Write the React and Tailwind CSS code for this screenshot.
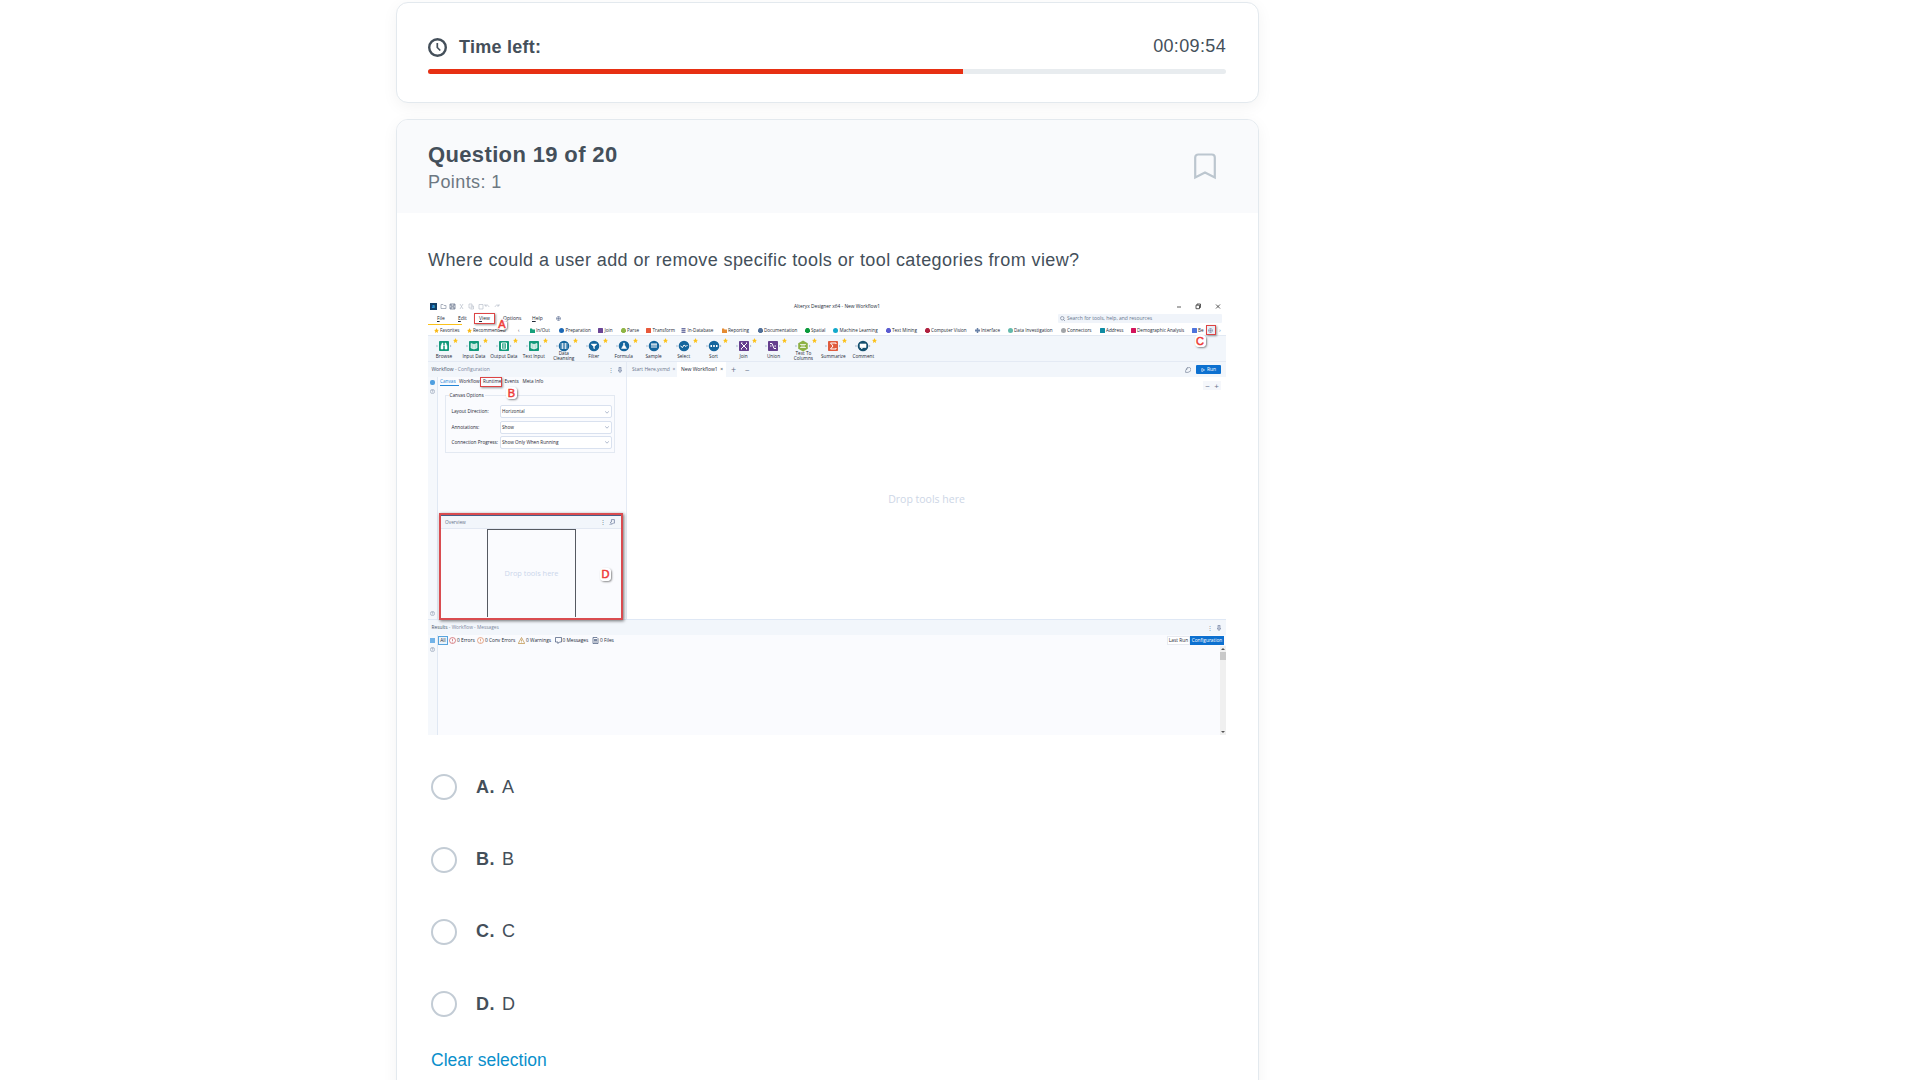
import React from "react";

const categories = [
  { x: 433.5, label: "Favorites", color: "#f9b917", shape: "star" },
  { x: 466.5, label: "Recommended", color: "#f9b917", shape: "star" },
  { x: 518, label: "‹", shape: "none" },
  { x: 529.5, label: "In/Out", color: "#15a07c", shape: "folder" },
  { x: 559, label: "Preparation", color: "#1b68b5", shape: "round" },
  { x: 598, label: "Join", color: "#6b4596", shape: "square" },
  { x: 620.5, label: "Parse", color: "#8fb545", shape: "hex" },
  { x: 646, label: "Transform", color: "#e8583a", shape: "square" },
  { x: 681, label: "In-Database", color: "#6f74a4", shape: "stack" },
  { x: 721.5, label: "Reporting", color: "#e58b32", shape: "folder" },
  { x: 757.5, label: "Documentation", color: "#50709a", shape: "hex" },
  { x: 804.5, label: "Spatial", color: "#0b9a3c", shape: "hex" },
  { x: 833, label: "Machine Learning", color: "#12a9cc", shape: "round" },
  { x: 885.5, label: "Text Mining", color: "#5a5bd0", shape: "hex" },
  { x: 924.5, label: "Computer Vision", color: "#b0203f", shape: "hex" },
  { x: 974.5, label: "Interface", color: "#6a82a8", shape: "cross" },
  { x: 1007.5, label: "Data Investigation", color: "#62b9ab", shape: "round" },
  { x: 1060.5, label: "Connectors", color: "#a2a5a9", shape: "round" },
  { x: 1099.5, label: "Address", color: "#0e8ba3", shape: "square" },
  { x: 1130.5, label: "Demographic Analysis", color: "#d3135c", shape: "square" },
  { x: 1191.5, label: "Be", color: "#4f74dc", shape: "square" },
];

const tools = [
  ["Browse", "browse", "#12997a"],
  ["Input Data", "book", "#12997a"],
  ["Output Data", "page", "#12997a"],
  ["Text Input", "book", "#12997a"],
  ["Data\nCleansing", "grid", "#14659d"],
  ["Filter", "funnel", "#14659d"],
  ["Formula", "flask", "#14659d"],
  ["Sample", "tubes", "#14659d"],
  ["Select", "check", "#14659d"],
  ["Sort", "dots", "#14659d"],
  ["Join", "join", "#643e8e"],
  ["Union", "union", "#643e8e"],
  ["Text To\nColumns", "columns", "#8db144"],
  ["Summarize", "sigma", "#e05c3e"],
  ["Comment", "comment", "#14506f"],
];

function CategoryShape({ shape, color }) {
  if (shape === "none") return null;
  return (
    <svg className="size-[5px] shrink-0" viewBox="0 0 10 10" fill={color}>
      {shape === "star" && <path d="M5 0l1.500 3.400 3.500.4-2.600 2.400.7 3.600L5 8 1.900 9.800l.7-3.600L0 3.800l3.500-.4z" />}
      {shape === "folder" && <path d="M0 1h4l1 2h5v7H0z" />}
      {shape === "round" && <circle cx="5" cy="5" r="5" />}
      {shape === "square" && <rect width="10" height="10" rx="1" />}
      {shape === "hex" && <path d="M3 0h4l3 3v4l-3 3H3L0 7V3z" />}
      {shape === "stack" && <path d="M1 0h8v3H1zM1 4h8v2H1zM1 7h8v3H1z" />}
      {shape === "cross" && <path d="M3.500 0h3v3H10v4H6.500v3h-3V7H0V3h3.500z" />}
    </svg>
  );
}

function ToolGlyph({ kind, color }) {
  const square = ["browse", "book", "page", "join", "union", "sigma"].includes(kind);
  return (
    <svg className="h-[12px] w-[18px] shrink-0" viewBox="0 0 18 12">
      <path d="M1.500 4.700v2.600L3 6zM15 4.700v2.600L16.500 6z" fill="#9fb4cb" />
      {square ? (
        <rect x="4" y="1" width="10" height="10" rx="0.800" fill={color} />
      ) : kind === "columns" ? (
        <path d="M9 .5l4.800 2.700v5.600L9 11.500 4.200 8.800V3.200z" fill={color} />
      ) : (
        <circle cx="9" cy="6" r="5.300" fill={color} />
      )}
      <g stroke="#fff" strokeWidth="1" fill="none">
        {kind === "browse" && <path d="M6 9V6l1.200-3h.8v6zM12 9V6l-1.200-3H10v6zM8 5.500h2" fill="#fff" strokeWidth=".5" />}
        {kind === "book" && <path d="M6 3.500l3 1 3-1v4.500L9 9 6 8zM9 4.500V9" fill="#fff" fillOpacity=".7" strokeWidth=".6" />}
        {kind === "page" && <path d="M6.500 3h5v6h-5zM7.500 5h3M7.500 7h3" />}
        {kind === "grid" && <path d="M5.500 4h7M5.500 6h7M5.500 8h7M7.500 3v6M10.500 3v6" strokeWidth=".7" />}
        {kind === "funnel" && <path d="M6 4h6L9.500 6.500V9l-1-1V6.500z" fill="#fff" strokeWidth=".4" />}
        {kind === "flask" && <path d="M8.500 3h1v2l2 3.500h-5l2-3.500z" fill="#fff" strokeWidth=".5" />}
        {kind === "tubes" && <path d="M6 4h6M7 4v4M9 4v4M11 4v4" />}
        {kind === "check" && <path d="M5.500 6l2 1.500L9 5l2 1.500L12.500 5" />}
        {kind === "dots" && <path d="M5.500 6h1.500M8.200 6h1.600M11 6h1.500" strokeWidth="1.800" />}
        {kind === "join" && <path d="M6 3l6 6M12 3L6 9M6 3h1.500M11 3h1M6 9h1M11 9h1" />}
        {kind === "union" && <path d="M6 3.500h2l2 5h2M6 6h1.500M10.500 6H12" />}
        {kind === "columns" && <path d="M6 4.500h6M6 7.500h6M8 4v4M10 4v4" strokeWidth=".7" />}
        {kind === "sigma" && <path d="M12 4V3H6.500L9 6 6.500 9H12V8" />}
        {kind === "comment" && <path d="M6 4h6v3.500H9L7.500 9V7.500H6z" fill="#fff" strokeWidth=".6" />}
      </g>
    </svg>
  );
}

function Star() {
  return (
    <svg className="absolute top-[2px] right-[1px] size-[5px]" viewBox="0 0 10 10">
      <path d="M5 0l1.500 3.400 3.500.4-2.600 2.400.7 3.600L5 8 1.900 9.800l.7-3.600L0 3.800l3.500-.4z" fill="#fbc21b" />
    </svg>
  );
}

function Marker({ children, className }) {
  return (
    <span
      className={
        "absolute z-10 rounded-[4px] bg-white/90 text-center font-['Liberation_Sans'] font-normal text-[#ee3b38] shadow-[1px_1px_2px_rgba(0,0,0,0.45)] [-webkit-text-stroke:0.500px_#ee3b38] " +
        className
      }
    >
      {children}
    </span>
  );
}

function Pin() {
  return (
    <svg className="size-[6px]" viewBox="0 0 10 10" fill="none" stroke="#68789a" strokeWidth="1.200">
      <path d="M3 1h4M3.500 1v4L2 6.500h6L6.500 5V1M5 6.500V10" />
    </svg>
  );
}

function TitleBar() {
  return (
    <div className="flex h-[13px] items-center pl-[2px]">
      <div className="flex size-[7px] items-center justify-center bg-[#123f68] text-[5px] font-bold text-[#39b3f0]">a</div>
      <svg className="ml-[3px] h-[7px] w-[66px]" viewBox="0 0 66 7" fill="none" strokeWidth=".7">
        <path d="M1 1.500h2l1 1h2v3H1z" stroke="#8d96a8" />
        <path d="M10 1h5v5h-5zM11 1v2h3V1M11 6V4h3v2" stroke="#596783" />
        <path d="M20 1l3 5M23 1l-3 5M29 1h3v4h-3zM30.500 3h3v3h-3M39 1.500h4V6h-4z" stroke="#b9c0cb" />
        <path d="M49 4c-1-3-3-2-4-1M45 1v2h2M55 4c1-3 3-2 4-1M59 1v2h-2" stroke="#b9c0cb" />
      </svg>
      <div className="ml-[288px] w-[92px] text-[4.850px] font-medium text-[#222936]">Alteryx Designer x64 - New Workflow1</div>
      <svg className="ml-[289px] h-[7px] w-[48px]" viewBox="0 0 48 7" fill="none" stroke="#333" strokeWidth=".8">
        <path d="M2 4h4M21 2.200h3.500v3.500H21zM22 2V1h3.500v3.500h-1M41 1.500l4 4M45 1.500l-4 4" />
      </svg>
    </div>
  );
}

function MenuBar() {
  return (
    <div className="flex h-[11px] items-center pl-[9px] text-[5px] text-[#222936]">
      <span className="w-[21px]"><u>F</u>ile</span>
      <span className="w-[21px]"><u>E</u>dit</span>
      <span className="relative w-[24px]">
        <u>V</u>iew
        <span className="absolute -top-[3px] -left-[5px] h-[11px] w-[21px] border-[1.500px] border-[#dd4444] shadow-[1px_1px_2px_rgba(0,0,0,0.4)]" />
        <Marker className="top-[3px] left-[18px] h-[11px] w-[10px] text-[11px] leading-[11px]">A</Marker>
      </span>
      <span className="w-[29px]"><u>O</u>ptions</span>
      <span className="w-[24px]"><u>H</u>elp</span>
      <svg className="size-[5px]" viewBox="0 0 10 10" fill="none" stroke="#667799" strokeWidth="1.300">
        <circle cx="5" cy="5" r="4" /><path d="M1 5h8M5 1v8" />
      </svg>
      <div className="ml-[497px] flex h-[9px] w-[164px] items-center gap-[2px] rounded-[1px] bg-[#f0f4fa] pl-[2px] text-[#66748c]">
        <svg className="size-[5px]" viewBox="0 0 10 10" fill="none" stroke="#66748c" strokeWidth="1.200">
          <circle cx="4.500" cy="4.500" r="3.500" /><path d="M7 7l3 3" />
        </svg>
        Search for tools, help, and resources
      </div>
    </div>
  );
}

function CategoryTabs() {
  return (
    <div className="relative flex h-[12px] items-center border-b border-[#e2e9f3] pt-[1px] pl-[5.500px] text-[4.600px] text-[#222936]">
      <span className="absolute top-0 left-0 h-[1px] w-[34px] bg-[#fbc21b]" />
      {categories.map((c, i) => (
        <div
          key={c.label}
          className="flex shrink-0 items-center gap-[1.500px] overflow-visible"
          style={{ width: (categories[i + 1] ? categories[i + 1].x : 1205.5) - c.x }}
        >
          <CategoryShape shape={c.shape} color={c.color} />
          {c.label}
        </div>
      ))}
      <div className="relative flex size-[10.500px] shrink-0 items-center justify-center border-[1.500px] border-[#dd4444] bg-[#e9eef6] shadow-[1px_1px_2px_rgba(0,0,0,0.4)]">
        <svg className="size-[5px]" viewBox="0 0 10 10" fill="none" stroke="#667799"><circle cx="5" cy="5" r="4" /><path d="M1 5h8M5 1v8" /></svg>
        <Marker className="top-[9px] -left-[12px] h-[12px] w-[11px] text-[11px] leading-[12px]">C</Marker>
      </div>
      <span className="ml-[3px] text-[6px] text-[#667799]">›</span>
    </div>
  );
}

function Ribbon() {
  return (
    <div className="flex h-[26px] shrink-0 border-b border-[#e4eaf4] bg-[#f2f6fb] pl-[1px]">
      {tools.map(([label, kind, color]) => (
        <div key={label} className="relative flex w-[29.960px] flex-col items-center pt-[4px]">
          <Star />
          <ToolGlyph kind={kind} color={color} />
          <div
            className={
              "text-center text-[4.700px] whitespace-pre text-[#222936] " +
              (label.includes("\n") ? "-mt-[1.500px] leading-[5.200px]" : "leading-[8px]")
            }
          >
            {label}
          </div>
        </div>
      ))}
    </div>
  );
}

function SideStrip({ children }) {
  return <div className="flex w-[10px] shrink-0 flex-col items-center border-r border-[#e0e8f3] bg-[#f5f8fc]">{children}</div>;
}

function Help() {
  return (
    <svg className="size-[5px]" viewBox="0 0 10 10" fill="none" stroke="#8b98ae" strokeWidth="1.200">
      <circle cx="5" cy="5" r="4.200" /><path d="M3.500 4c0-2 3-2 3 0L5 5.500V7" />
    </svg>
  );
}

function SelectRow({ label, value }) {
  return (
    <div className="flex h-[15.400px] items-center">
      <span className="w-[48.500px]">{label}</span>
      <span className="flex h-[13px] w-[112px] items-center justify-between rounded-[2px] border border-[#d9e1ef] bg-white pr-[2px] pl-[1px]">
        {value}
        <svg className="size-[4px]" viewBox="0 0 10 10" fill="none" stroke="#8293b0" strokeWidth="1.600"><path d="M0 3l5 5 5-5" /></svg>
      </span>
    </div>
  );
}

function Configuration() {
  return (
    <div className="flex w-[199px] shrink-0 flex-col border-r border-[#e4eaf4] bg-[#fafbfe]">
      <div className="flex h-[15px] shrink-0 items-center bg-[#f2f6fb] pl-[3.500px] text-[5px] text-[#7c879c]">
        <span className="w-[176px]"><b className="font-medium text-[#465269]">Workflow</b> - Configuration</span>
        <span className="w-[9px] text-[6px] leading-none">⋮</span>
        <Pin />
      </div>
      <div className="flex flex-1">
        <SideStrip>
          <span className="mt-[3px] size-[5px] rounded-[2px] bg-[#4f9fe0]" />
          <span className="mt-[4px]"><Help /></span>
          <span className="mt-auto mb-[3px]"><Help /></span>
        </SideStrip>
        <div className="flex w-[188px] flex-col">
          <div className="flex h-[9px] items-center pl-[2px] text-[4.700px] text-[#1f2735]">
            <span className="flex h-[8px] w-[19px] items-center border-b border-[#2585d6] text-[#2585d6]">Canvas</span>
            <span className="w-[24px]">Workflow</span>
            <span className="relative w-[21.500px]">
              Runtime
              <span className="absolute -top-[2.500px] -left-[3px] h-[10px] w-[22px] border-[1.500px] border-[#dd4444] shadow-[1px_1px_2px_rgba(0,0,0,0.4)]" />
              <Marker className="top-[8px] left-[23px] h-[12px] w-[11px] text-[11px] leading-[12px]">B</Marker>
            </span>
            <span className="w-[18px]">Events</span>
            <span>Meta Info</span>
          </div>
          <fieldset className="mt-[6px] ml-[7px] h-[61px] w-[170px] border border-[#e3e9f2] pl-[5.500px] text-[4.700px] text-[#1f2735]">
            <legend className="-ml-[3px] px-[1px] leading-[6px]">Canvas Options</legend>
            <div className="pt-[6px]">
              <SelectRow label="Layout Direction:" value="Horizontal" />
              <SelectRow label="Annotations:" value="Show" />
              <SelectRow label="Connection Progress:" value="Show Only When Running" />
            </div>
          </fieldset>
          <Overview />
        </div>
      </div>
    </div>
  );
}

function Overview() {
  return (
    <div className="relative mt-auto -mb-px ml-[1px] flex h-[107px] w-[184px] shrink-0 flex-col border-2 border-[#d94c50] bg-[#fafbfe] shadow-[1px_1px_3px_rgba(0,0,0,0.55)]">
      <div className="flex h-[14px] items-center border-t border-b border-t-[#465f88] border-b-[#e2e8f2] bg-[#f2f6fb] pl-[4px] text-[4.800px] text-[#68748a]">
        <span className="w-[155px]">Overview</span>
        <span className="w-[9px] text-[6px] leading-none">⋮</span>
        <svg className="size-[6px]" viewBox="0 0 10 10" fill="none" stroke="#68789a" strokeWidth="1.200">
          <path d="M4 1h5v6H7M4 1v4L2 6l3 3 1-2M3 8L1 10" />
        </svg>
      </div>
      <div className="ml-[46px] flex h-[88px] w-[89px] items-center justify-center border-x border-t border-[#555a62] text-[7.400px] text-[#cbd6eb]">
        Drop tools here
      </div>
      <Marker className="top-[53px] left-[159px] h-[13px] w-[11px] text-[11px] leading-[13px]">D</Marker>
    </div>
  );
}

function Canvas() {
  return (
    <div className="flex flex-1 flex-col bg-white">
      <div className="flex h-[15px] items-center bg-[#f2f6fb] pl-[5px] text-[5px] text-[#68748a]">
        <span className="w-[45px]">Start Here.yxmd &nbsp;×</span>
        <span className="flex h-full w-[49px] items-center bg-white pl-[4px] text-[#222936]">New Workflow1 &nbsp;×</span>
        <span className="w-[14px] pl-[5px] text-[9px]">+</span>
        <span className="w-[12px] pl-[5px] text-[8px]">−</span>
        <svg className="ml-[433px] size-[6px]" viewBox="0 0 10 10" fill="none" stroke="#66748c"><path d="M2 5a4 4 0 117 2L5 9H1V6l4-4" /></svg>
        <span className="ml-[5px] flex h-[9px] w-[25px] items-center justify-center gap-[2px] rounded-[1px] bg-[#0c70d0] text-white">
          <svg className="size-[4px]" viewBox="0 0 10 10" fill="none" stroke="#fff" strokeWidth="1.500"><path d="M2 1l7 4-7 4z" /></svg>
          Run
        </span>
      </div>
      <div className="mt-[4px] mr-[5px] flex h-[9px] w-[18px] items-center justify-around self-end bg-[#f5f7fb] text-[8px] text-[#66748c]">
        <span>−</span>
        <span>+</span>
      </div>
      <div className="mt-[99px] text-center text-[10.500px] leading-[20px] text-[#cdd6e6]">Drop tools here</div>
    </div>
  );
}

function ResultIcon({ kind }) {
  return (
    <svg className="size-[7px] shrink-0" viewBox="0 0 14 14" fill="none" strokeWidth="1.300">
      {kind === "error" && <path d="M7 1a6 6 0 100 12A6 6 0 007 1M7 3.500V8M7 9.500V11" stroke="#c94b52" />}
      {kind === "conv" && <path d="M7 1a6 6 0 100 12A6 6 0 007 1M7 3.500V8M7 9.500V11" stroke="#dd8052" />}
      {kind === "warn" && <path d="M7 1l6.500 12H.5zM7 5v4M7 10.500v1" stroke="#b88532" />}
      {kind === "message" && <path d="M1 1h12v9H9l-3 3v-3H1z" stroke="#34486d" />}
      {kind === "file" && <path d="M2 1h8l2 2v10H2zM4 5h6M4 7h6M4 10h6" stroke="#34486d" />}
    </svg>
  );
}

const resultFilters = [
  ["error", "0 Errors", 28],
  ["conv", "0 Conv Errors", 41],
  ["warn", "0 Warnings", 36.5],
  ["message", "0 Messages", 37.5],
  ["file", "0 Files", 30],
];

function Results() {
  return (
    <div className="flex h-[116px] shrink-0 flex-col border-t border-[#dfe8f5] bg-[#fafbfe]">
      <div className="flex h-[15px] shrink-0 items-center bg-[#f2f6fb] pl-[3.500px] text-[4.800px] text-[#7c879c]">
        <span className="w-[775px]"><b className="font-medium text-[#465269]">Results</b> - Workflow - Messages</span>
        <span className="w-[9px] text-[6px] leading-none">⋮</span>
        <Pin />
      </div>
      <div className="flex flex-1">
        <SideStrip>
          <span className="mt-[3px] size-[5px] bg-[#72b3e8]" />
          <span className="mt-[4px]"><Help /></span>
        </SideStrip>
        <div className="flex flex-1 flex-col">
          <div className="flex h-[11px] items-center text-[4.800px] text-[#222936]">
            <span className="mr-[1px] flex h-[9px] w-[10px] items-center justify-center border border-[#58a4dd] bg-[#eaf4fd]">All</span>
            {resultFilters.map(([kind, label, width]) => (
              <span key={kind} className="flex items-center gap-[1px] whitespace-nowrap" style={{ width }}>
                <ResultIcon kind={kind} />
                {label}
              </span>
            ))}
            <span className="ml-auto flex h-[9px] w-[23px] items-center justify-center border border-[#e7eaf0] bg-white">Last Run</span>
            <span className="mr-[2px] flex h-[9px] w-[34px] items-center justify-center bg-[#0c70d0] text-white">Configuration</span>
          </div>
          <div className="flex flex-1 w-[6px] flex-col items-center self-end bg-[#f0f0f0]">
            <svg className="h-[6px] w-[4px]" viewBox="0 0 8 12" fill="#555"><path d="M0 8l4-4 4 4z" /></svg>
            <span className="h-[8px] w-[6px] bg-[#c9c9c9]" />
            <svg className="mt-auto h-[6px] w-[4px]" viewBox="0 0 8 12" fill="#555"><path d="M0 4l4 4 4-4z" /></svg>
          </div>
        </div>
      </div>
    </div>
  );
}

function DesignerScreen() {
  return (
    <div className="flex h-[435px] w-[798px] flex-col overflow-hidden bg-white font-['Open_Sans',sans-serif] leading-none tracking-normal whitespace-nowrap">
      <TitleBar />
      <MenuBar />
      <CategoryTabs />
      <Ribbon />
      <div className="flex min-h-0 flex-1">
        <Configuration />
        <Canvas />
      </div>
      <Results />
    </div>
  );
}

function TimerCard() {
  return (
    <section className="h-[101px] rounded-xl border border-[#e3e9ee] bg-white pt-[31px] pr-[32px] pl-[31px] shadow-[0_4px_16px_rgba(0,0,0,0.05)]">
      <div className="flex h-[26px] items-center">
        <svg className="mt-[1px] size-[19px]" viewBox="0 0 19 19" fill="none" stroke="#444f5a">
          <circle cx="9.500" cy="9.500" r="8.300" strokeWidth="2.400" />
          <path d="M9.300 5v4.500l3 3" strokeWidth="1.700" />
        </svg>
        <span className="ml-3 text-[18px] font-bold tracking-[0.260px]">Time left:</span>
        <span className="-mt-[2px] ml-auto text-[18px] tracking-[0.350px]">00:09:54</span>
      </div>
      <div className="mt-[9px] h-[5px] overflow-hidden rounded-full bg-[#e8ecef]">
        <div className="h-full w-[67%] bg-[#e73013]" />
      </div>
    </section>
  );
}

function QuestionCard() {
  return (
    <section className="h-[1000px] overflow-hidden rounded-xl border border-[#e3e9ee] bg-white shadow-[0_4px_16px_rgba(0,0,0,0.05)]">
      <header className="flex h-[93px] justify-between bg-[#f9fafc] pt-[21px] pr-[42px] pl-[31px]">
        <div>
          <h1 className="text-[22px] leading-[28px] font-bold tracking-[0.360px]">Question 19 of 20</h1>
          <p className="text-[18px] leading-[27px] tracking-[0.400px] text-[#6d7882]">Points: 1</p>
        </div>
        <svg className="mt-[12px] h-[27px] w-[22px]" viewBox="0 0 22 27" fill="none" stroke="#bcc6cf" strokeWidth="2.200">
          <path d="M1.200 24.500V4.500a3 3 0 013-3h13.600a3 3 0 013 3v20L11 19.500z" />
        </svg>
      </header>
      <div className="px-[31px] pt-[34px]">
        <p className="text-[18px] leading-[27px] tracking-[0.406px]">
          Where could a user add or remove specific tools or tool categories from view?
        </p>
        <div className="mt-[26px]">
          <DesignerScreen />
        </div>
        <ul className="mt-[16px] ml-[3.400px]">
          {["A", "B", "C", "D"].map((letter) => (
            <li key={letter} className="flex h-[72.400px] items-center text-[18px]">
              <span className="size-[26px] rounded-full border-2 border-[#c3ccd5]" />
              <b className="ml-[18.600px] w-[26px] tracking-[0.500px]">{letter}.</b>
              <span>{letter}</span>
            </li>
          ))}
        </ul>
        <button className="mt-[6.500px] ml-[3px] text-[17.500px] leading-[27px] text-[#0a8fcb]">Clear selection</button>
      </div>
    </section>
  );
}

export default function App() {
  return (
    <div className="h-[1080px] overflow-hidden bg-white pt-[2px] font-['Liberation_Sans',Arial,sans-serif] text-[#444f5a]">
      <main className="ml-[396px] flex w-[863px] flex-col gap-4">
        <TimerCard />
        <QuestionCard />
      </main>
    </div>
  );
}
